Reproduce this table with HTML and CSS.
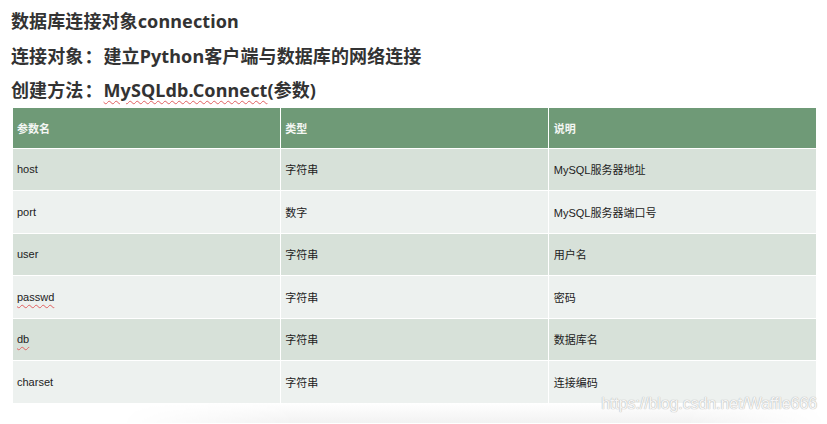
FILE: index.html
```html
<!DOCTYPE html>
<html lang="zh">
<head>
<meta charset="utf-8">
<link rel="stylesheet" href="styles.css">
</head>
<body>
<div class="page">
  <div class="titles">
    <p class="title">数据库连接对象connection</p>
    <p class="title">连接对象<span class="colon">：</span>建立Python客户端与数据库的网络连接</p>
    <p class="title">创建方法<span class="colon">：</span><span class="spell">MySQLdb.Connect</span>(参数)</p>
  </div>
  <table class="params">
    <thead>
      <tr><th>参数名</th><th>类型</th><th>说明</th></tr>
    </thead>
    <tbody>
      <tr class="odd"><td>host</td><td>字符串</td><td>MySQL服务器地址</td></tr>
      <tr class="even"><td>port</td><td>数字</td><td>MySQL服务器端口号</td></tr>
      <tr class="odd"><td class="low">user</td><td class="high">字符串</td><td class="low">用户名</td></tr>
      <tr class="even"><td><span class="spell">passwd</span></td><td>字符串</td><td>密码</td></tr>
      <tr class="odd"><td><span class="spell">db</span></td><td>字符串</td><td>数据库名</td></tr>
      <tr class="even"><td>charset</td><td>字符串</td><td>连接编码</td></tr>
    </tbody>
  </table>
  <div class="footer">
    <div class="shade"></div>
    <span class="watermark">https://blog.csdn.net/Waffle666</span>
  </div>
</div>
</body>
</html>
```

FILE: styles.css
```css
html, body {
  margin: 0;
  padding: 0;
  background: #ffffff;
}
.page {
  width: 827px;
  height: 424px;
  overflow: hidden;
  font-family: "Noto Sans", "Noto Sans CJK SC", sans-serif;
}
.titles {
  padding: 5px 0 0 11px;
}
.title {
  margin: 0;
  font-size: 18px;
  font-weight: 700;
  line-height: 33.5px;
  color: #333333;
  letter-spacing: 0.1px;
}
.colon {
  font-family: "Noto Sans CJK TC", sans-serif;
  padding: 0 1px;
}
.spell {
  text-decoration: underline wavy #e06060;
  text-decoration-thickness: 1px;
  text-underline-offset: 3px;
}
.params {
  margin: 0 0 0 13px;
  width: 803px;
  border-collapse: collapse;
  table-layout: fixed;
  font-family: "Liberation Sans", "Noto Sans CJK SC", sans-serif;
  font-size: 11px;
  color: #222222;
}
.params th, .params td {
  border: 1px solid #ffffff;
  text-align: left;
  padding: 0 0 0 4px;
  vertical-align: middle;
}
.params th {
  background: #6f9a77;
  color: #f3f6f3;
  font-weight: 700;
  height: 40px;
  border-top: none;
}
.params th:first-child, .params td:first-child { border-left: none; }
.params th:last-child, .params td:last-child { border-right: none; }
.params td { height: 41.5px; }
.odd td { background: #d7e1d9; }
.even td { background: #edf1ef; }
.params tbody tr:last-child td { border-bottom: none; }
.low { padding-top: 2px; }
.high { vertical-align: top; padding-top: 6px; }
.params td:nth-child(3), .params th:nth-child(3) { padding-left: 5px; }
.footer {
  position: relative;
  height: 20px;
}
.shade {
  margin-left: 120px;
  height: 20px;
  background: linear-gradient(180deg, #ffffff 0%, #f2f2f2 100%);
  -webkit-mask-image: linear-gradient(90deg, transparent 0%, #000 25%, #000 80%, transparent 100%);
  mask-image: linear-gradient(90deg, transparent 0%, #000 25%, #000 80%, transparent 100%);
}
.watermark {
  position: absolute;
  right: 10px;
  top: -8px;
  font-family: "Liberation Sans", sans-serif;
  font-size: 16px;
  color: #f6f6f6;
  text-shadow: 0 0 1px #b0b0b0, 0 0 1px #c4c4c4;
  letter-spacing: -0.1px;
}
```
